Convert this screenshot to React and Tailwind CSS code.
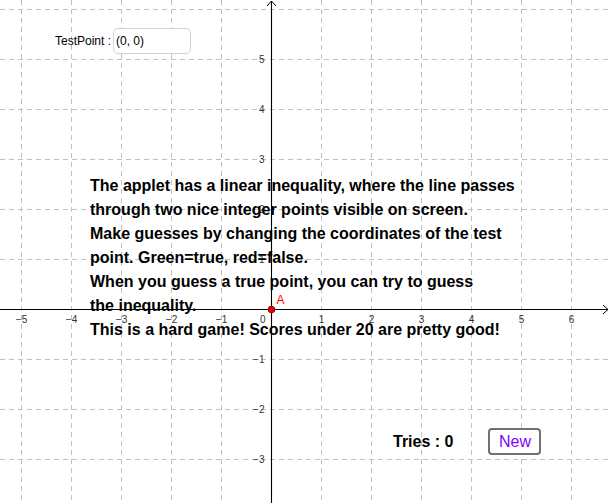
import React from "react";

const OX = 271.5;
const OY = 309.5;
const U = 50;

const xs = [-5, -4, -3, -2, -1, 1, 2, 3, 4, 5, 6];
const ys = [5, 4, 3, 2, 1, -1, -2, -3];

const lines = [
  "The applet has a linear inequality, where the line passes",
  "through two nice integer points visible on screen.",
  "Make guesses by changing the coordinates of the test",
  "point. Green=true, red=false.",
  "When you guess a true point, you can try to guess",
  "the inequality.",
  "This is a hard game! Scores under 20 are pretty good!",
];

function fmt(n) {
  return n < 0 ? "\u2212" + Math.abs(n) : String(n);
}

function Graph() {
  const vGrid = [];
  for (let k = -5; k <= 6; k++) if (k !== 0) vGrid.push(OX + k * U);
  const hGrid = [];
  for (let k = -3; k <= 6; k++) if (k !== 0) hGrid.push(OY - k * U);

  return (
    <svg className="absolute inset-0" width="611" height="503" viewBox="0 0 611 503">
      {vGrid.map((x) => (
        <line key={"v" + x} x1={x} y1="0" x2={x} y2="503" stroke="#c0c0c0" strokeWidth="1" strokeDasharray="5 4" />
      ))}
      {hGrid.map((y) => (
        <line key={"h" + y} x1="0" y1={y} x2="611" y2={y} stroke="#c0c0c0" strokeWidth="1" strokeDasharray="5 4" />
      ))}
      {/* axes */}
      <line x1="0" y1={OY} x2="608" y2={OY} stroke="#000" strokeWidth="1.1" />
      <line x1={OX} y1="1" x2={OX} y2="503" stroke="#000" strokeWidth="1.1" />
      <polyline points={`603,${OY - 4.5} 608,${OY} 603,${OY + 4.5}`} fill="none" stroke="#000" strokeWidth="1" />
      <polyline points={`${OX - 4.5},6 ${OX},1 ${OX + 4.5},6`} fill="none" stroke="#000" strokeWidth="1" />

      <g fontFamily="Liberation Sans, Arial, sans-serif" fontSize="10" fill="#333">
        {xs.map((v) => (
          <text key={"xl" + v} x={OX + v * U} y={OY + 13.5} textAnchor="middle">
            {fmt(v)}
          </text>
        ))}
        {ys.map((v) => (
          <text key={"yl" + v} x={OX - 7} y={OY - v * U + 3.5} textAnchor="end">
            {fmt(v)}
          </text>
        ))}
        <text x={OX - 6} y={OY + 13.5} textAnchor="end">0</text>
      </g>

      <circle cx={OX} cy={OY} r="3.3" fill="#ee0000" stroke="#990000" strokeWidth="1" />
      <text x={OX + 5} y={OY - 6} fontFamily="Liberation Sans, Arial, sans-serif" fontSize="12" fill="#ff0000">
        A
      </text>
    </svg>
  );
}

export default function App() {
  return (
    <div className="relative w-[611px] h-[503px] bg-white overflow-hidden font-['Liberation_Sans',Arial,sans-serif]">
      <Graph />

      {/* TestPoint input */}
      <div className="absolute left-[55px] top-[28px] flex items-center gap-[2px]">
        <span className="text-[12px] text-black">TestPoint :</span>
        <div className="w-[78px] h-[26px] border-[1.5px] border-[#d4d4d4] rounded-[5px] bg-white flex items-center pl-[2px] text-[12px] text-black">
          (0, 0)
        </div>
      </div>

      {/* instructions */}
      <div className="absolute left-[90px] top-[174px] text-[16px] leading-[24px] font-bold text-black whitespace-nowrap">
        {lines.map((l, i) => (
          <div key={i}>{l}</div>
        ))}
      </div>

      {/* tries + new button */}
      <div className="absolute left-[393px] top-[428px] flex items-center gap-[35px]">
        <span className="text-[16px] font-bold text-black">Tries : 0</span>
        <button className="w-[53px] h-[27px] border-2 border-[#707070] rounded-[4px] bg-white text-[16px] text-[#8000ff] flex items-center justify-center">
          New
        </button>
      </div>
    </div>
  );
}
